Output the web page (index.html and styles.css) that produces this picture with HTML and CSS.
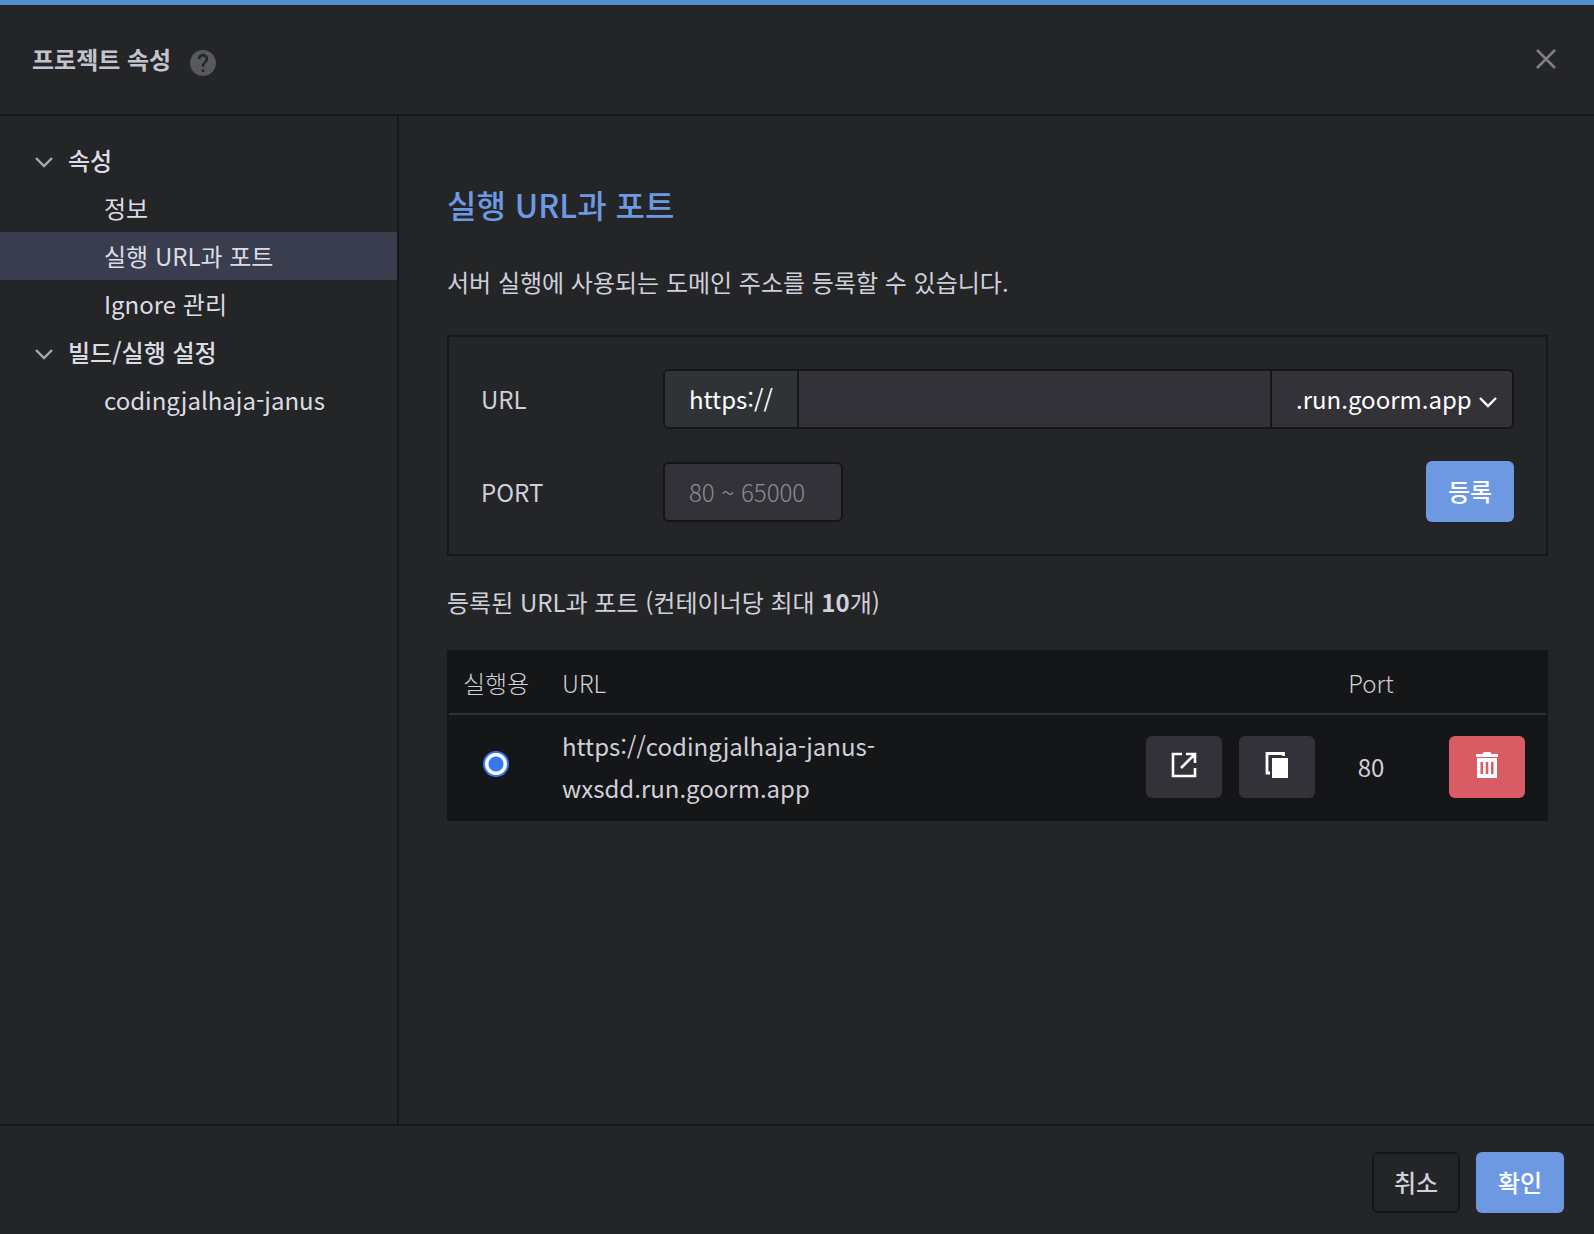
FILE: index.html
```
<!DOCTYPE html>
<html lang="ko">
<head>
<meta charset="utf-8">
<meta name="viewport" content="width=device-width, initial-scale=1">
<title>프로젝트 속성</title>
<link rel="stylesheet" href="styles.css">
</head>
<body>
<div class="dialog">
  <header class="dialog-header">
    <h1 class="dialog-title">프로젝트 속성</h1>
    <button class="icon-button" type="button" aria-label="도움말">
      <svg class="help-icon" viewBox="2 -4 20 26" aria-hidden="true"><path fill="currentColor" d="M12 2C6.48 2 2 6.48 2 12s4.48 10 10 10 10-4.48 10-10S17.520 2 12 2zm1 17h-2v-2h2v2zm2.070-7.750l-.9.920C13.450 12.900 13 13.500 13 15h-2v-.5c0-1.100.450-2.100 1.170-2.830l1.240-1.260c.370-.360.590-.860.590-1.410 0-1.100-.9-2-2-2s-2 .9-2 2H8c0-2.210 1.790-4 4-4s4 1.790 4 4c0 .880-.360 1.680-.930 2.250z"/></svg>
    </button>
    <button class="icon-button close-button" type="button" aria-label="닫기">
      <svg class="close-icon" viewBox="0 0 20 20" aria-hidden="true"><path d="M1 1L19 19M19 1L1 19" fill="none" stroke="currentColor" stroke-width="2.600"/></svg>
    </button>
  </header>

  <div class="dialog-body">
    <nav class="sidebar" aria-label="속성 메뉴">
      <ul class="tree">
        <li>
          <button class="tree-item tree-group" type="button" aria-expanded="true">
            <svg class="chevron" viewBox="0 -4 18 16" aria-hidden="true"><path d="M1 2L9 10L17 2" fill="none" stroke="currentColor" stroke-width="2.400"/></svg>
            속성
          </button>
          <ul class="tree">
            <li><a class="tree-item tree-leaf" href="#info">정보</a></li>
            <li><a class="tree-item tree-leaf is-selected" href="#url" aria-current="page">실행 URL과 포트</a></li>
            <li><a class="tree-item tree-leaf" href="#ignore">Ignore 관리</a></li>
          </ul>
        </li>
        <li>
          <button class="tree-item tree-group" type="button" aria-expanded="true">
            <svg class="chevron" viewBox="0 -4 18 16" aria-hidden="true"><path d="M1 2L9 10L17 2" fill="none" stroke="currentColor" stroke-width="2.400"/></svg>
            빌드/실행 설정
          </button>
          <ul class="tree">
            <li><a class="tree-item tree-leaf" href="#build">codingjalhaja-janus</a></li>
          </ul>
        </li>
      </ul>
    </nav>

    <main class="content">
      <h2 class="content-title">실행 URL과 포트</h2>
      <p class="content-text">서버 실행에 사용되는 도메인 주소를 등록할 수 있습니다.</p>

      <form class="register-form">
        <div class="form-row">
          <label class="form-label" for="url">URL</label>
          <div class="input-group">
            <span class="input-prefix">https://</span>
            <input class="text-input url-input" id="url" type="text">
            <div class="select-wrap">
              <select class="domain-select" aria-label="도메인"><option>.run.goorm.app</option></select>
              <svg class="chevron select-chevron" viewBox="0 -4 18 16" aria-hidden="true"><path d="M1 2L9 10L17 2" fill="none" stroke="currentColor" stroke-width="2.400"/></svg>
            </div>
          </div>
        </div>
        <div class="form-row">
          <label class="form-label" for="port">PORT</label>
          <input class="text-input port-input" id="port" type="text" placeholder="80 ~ 65000">
          <button class="button button-primary form-submit" type="button">등록</button>
        </div>
      </form>

      <p class="table-caption">등록된 URL과 포트 (컨테이너당 최대 <strong>10</strong>개)</p>

      <table class="url-table">
        <thead>
          <tr>
            <th class="col-run" scope="col">실행용</th>
            <th class="col-url" scope="col">URL</th>
            <th class="col-actions"></th>
            <th class="col-port" scope="col">Port</th>
            <th class="col-delete"></th>
          </tr>
        </thead>
        <tbody>
          <tr>
            <td class="col-run"><input class="run-radio" type="radio" name="run" aria-label="실행용 URL" checked></td>
            <td class="col-url">https://codingjalhaja-janus-wxsdd.run.goorm.app</td>
            <td class="col-actions">
              <div class="actions">
                <button class="tool-button" type="button" aria-label="새 창에서 열기">
                  <svg class="tool-icon" viewBox="0 0 28 32" aria-hidden="true"><path d="M12 3H3V25H25V17M16 3H25V12M25 3L11 17" fill="none" stroke="currentColor" stroke-width="2.600"/></svg>
                </button>
                <button class="tool-button" type="button" aria-label="복사">
                  <svg class="tool-icon" viewBox="0 0 28 32" aria-hidden="true"><path d="M20.500 5V2.500H4V22H7" fill="none" stroke="currentColor" stroke-width="2.800"/><path d="M9 7H25V27H9Z" fill="currentColor"/></svg>
                </button>
              </div>
            </td>
            <td class="col-port">80</td>
            <td class="col-delete">
              <div class="actions">
                <button class="tool-button tool-danger" type="button" aria-label="삭제">
                  <svg class="tool-icon" viewBox="0 0 28 32" aria-hidden="true"><path fill="currentColor" fill-rule="evenodd" d="M3 3H9L11 1H17L19 3H25V6H3ZM4 7H24V27H4ZM7.500 11V23H10V11ZM12.700 11V23H15.300V11ZM18 11V23H20.500V11Z"/></svg>
                </button>
              </div>
            </td>
          </tr>
        </tbody>
      </table>
    </main>
  </div>

  <footer class="dialog-footer">
    <button class="button button-outline" type="button">취소</button>
    <button class="button button-primary" type="button">확인</button>
  </footer>
</div>
</body>
</html>
```
FILE: styles.css
```
:root {
  --bg: #242527;
  --line: #15161a;
  --text: #d0d0da;
  --field: #323238;
  --blue: #6d99e3;
}

* {
  box-sizing: border-box;
}

body {
  margin: 0;
  background: var(--bg);
  color: var(--text);
  font: 400 24px/42px "Noto Sans CJK KR", sans-serif;
}

button,
input,
select {
  font: inherit;
  color: inherit;
}

h1,
h2,
p,
ul {
  margin: 0;
  padding: 0;
}

ul {
  list-style: none;
}

.dialog {
  display: flex;
  flex-direction: column;
  min-height: 100vh;
  border-top: 5px solid #4f90d0;
}

.dialog-header {
  display: flex;
  align-items: center;
  height: 111px;
  padding: 0 38px 2px 32px;
  border-bottom: 2px solid #17181a;
}

.dialog-title {
  margin-right: 19px;
  font-size: 24px;
  font-weight: 700;
  color: #c3c3cf;
}

.icon-button {
  display: flex;
  padding: 0;
  border: 0;
  background: none;
}

.help-icon {
  width: 26px;
  height: 34px;
  color: #58595b;
}

.close-button {
  margin-left: auto;
}

.close-icon {
  width: 20px;
  height: 20px;
  color: #7e7e88;
}

.dialog-body {
  display: flex;
  flex: 1;
}

.sidebar {
  flex: 0 0 399px;
  padding-top: 20px;
  border-right: 2px solid #17181a;
  color: #dcdce4;
}

.tree-item {
  display: flex;
  align-items: center;
  width: 100%;
  height: 48px;
  border: 0;
  background: none;
  color: inherit;
  text-decoration: none;
}

.tree-group {
  gap: 15px;
  padding: 0 0 0 35px;
  font-weight: 500;
}

.tree-leaf {
  padding-left: 104px;
}

.is-selected {
  background: #393d4d;
}

.chevron {
  flex: none;
  width: 18px;
  height: 16px;
}

.tree-group .chevron {
  color: #a9a9b2;
}

.content {
  flex: 1;
  min-width: 0;
  padding: 64px 46px 32px 48px;
}

.content-title {
  margin-bottom: 33px;
  font-size: 32px;
  font-weight: 500;
  line-height: 48px;
  color: var(--blue);
}

.content-text {
  margin-bottom: 32px;
}

.table-caption {
  margin-bottom: 27px;
}

.register-form {
  display: flex;
  flex-direction: column;
  gap: 32px;
  margin-bottom: 25px;
  padding: 32px;
  border: 2px solid #17181a;
}

.form-row {
  display: flex;
  align-items: center;
}

.form-label {
  flex: 0 0 182px;
}

.input-group {
  display: flex;
  flex: 1;
  min-width: 0;
  height: 60px;
  border: 2px solid var(--line);
  border-radius: 6px;
  background: var(--field);
  color: #fff;
  overflow: hidden;
}

.input-prefix {
  display: flex;
  align-items: center;
  padding: 0 24px;
  border-right: 2px solid var(--line);
  background: #2f3335;
}

.text-input {
  min-width: 0;
  height: 60px;
  padding: 0 24px;
  border: 2px solid var(--line);
  border-radius: 6px;
  background: var(--field);
  color: #fff;
}

.url-input {
  flex: 1;
  height: 56px;
  border: 0;
  border-radius: 0;
}

.port-input {
  width: 180px;
  font-weight: 300;
}

.port-input::placeholder {
  color: #8b8b96;
  opacity: 1;
}

.select-wrap {
  position: relative;
  display: flex;
  border-left: 2px solid var(--line);
}

.domain-select {
  width: 240px;
  padding: 0 24px;
  border: 0;
  background: transparent;
  appearance: none;
}

.select-chevron {
  position: absolute;
  top: 21px;
  right: 15px;
  pointer-events: none;
}

.button {
  width: 88px;
  height: 61px;
  padding: 0 0 2px;
  border: 0;
  border-radius: 6px;
  font-weight: 500;
}

.button-primary {
  background: var(--blue);
  color: #fff;
}

.button-outline {
  border: 2px solid var(--line);
  background: none;
}

.form-submit {
  margin-left: auto;
}

.url-table {
  width: 100%;
  table-layout: fixed;
  border: 2px solid #151618;
  border-spacing: 0;
  background: #151618;
}

.url-table th {
  height: 63px;
  padding: 0;
  border-bottom: 2px solid #303133;
  font-weight: 300;
}

.url-table td {
  height: 104px;
  padding: 0;
}

.url-table .col-run {
  width: 94px;
  text-align: center;
}

.url-table .col-url {
  padding: 0 20px 0 19px;
  text-align: left;
}

.url-table .col-actions {
  width: 201px;
}

.url-table .col-port {
  width: 80px;
  text-align: center;
}

.url-table .col-delete {
  width: 135px;
}

.run-radio {
  width: 26px;
  height: 26px;
  margin: 0;
  border: 2px solid #3478f6;
  border-radius: 50%;
  background: radial-gradient(circle, #3478f6 7px, #fff 8px);
  appearance: none;
}

.actions {
  display: flex;
  justify-content: flex-end;
  gap: 17px;
}

.col-actions .actions {
  padding-right: 16px;
}

.col-delete .actions {
  padding-right: 21px;
}

.tool-button {
  width: 76px;
  height: 62px;
  padding: 0;
  border: 0;
  border-radius: 6px;
  background: var(--field);
  color: #fff;
}

.tool-danger {
  background: #d95b63;
}

.tool-icon {
  display: block;
  width: 28px;
  height: 32px;
  margin: 0 auto;
}

.dialog-footer {
  display: flex;
  justify-content: flex-end;
  gap: 16px;
  padding: 26px 30px 21px;
  border-top: 2px solid #17181a;
}
```
